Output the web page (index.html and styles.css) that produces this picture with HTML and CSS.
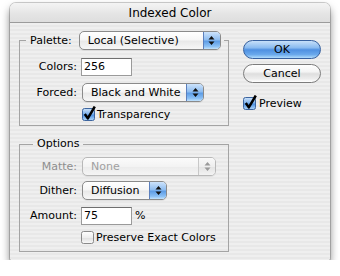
FILE: index.html
```html
<!DOCTYPE html>
<html>
<head>
<meta charset="utf-8">
<link rel="stylesheet" href="styles.css">
</head>
<body>
<div class="window">
  <div class="titlebar">Indexed Color</div>
  <div class="content">
    <div class="left">
      <fieldset class="group g1">
        <legend class="lg-popup">
          <span class="legend-row">
            <span class="lbl-legend">Palette:</span>
            <span class="popup w-palette">
              <span class="pv">Local (Selective)</span>
              <span class="arrows"><svg width="7" height="11" viewBox="0 0 7 11"><path d="M0.5 4.5 L3.5 1 L6.5 4.5 Z M0.5 6.5 L3.5 10 L6.5 6.5 Z" fill="#111"/></svg></span>
            </span>
          </span>
        </legend>
        <div class="row r-colors"><span class="lbl">Colors:</span><span class="field">256</span></div>
        <div class="row r-forced"><span class="lbl">Forced:</span>
          <span class="popup w-forced">
            <span class="pv">Black and White</span>
            <span class="arrows"><svg width="7" height="11" viewBox="0 0 7 11"><path d="M0.5 4.5 L3.5 1 L6.5 4.5 Z M0.5 6.5 L3.5 10 L6.5 6.5 Z" fill="#111"/></svg></span>
          </span>
        </div>
        <div class="row r-check r-transp">
          <svg class="cb" width="14" height="15" viewBox="0 0 14 15"><defs><linearGradient id="cbA" x1="0" y1="0" x2="0" y2="1"><stop offset="0" stop-color="#cfe4fa"/><stop offset=".45" stop-color="#7fb2ec"/><stop offset=".55" stop-color="#4f92e2"/><stop offset="1" stop-color="#b4dafc"/></linearGradient></defs><rect x="0.5" y="2.5" width="12" height="12" rx="2" fill="url(#cbA)" stroke="#3d659f"/><path d="M2.8 8 L5.8 12.4 L12.8 0.5" fill="none" stroke="#000" stroke-width="2.5" stroke-linejoin="round"/></svg>
          <span>Transparency</span>
        </div>
      </fieldset>
      <fieldset class="group g2">
        <legend class="lg-text">Options</legend>
        <div class="row r-matte disabled"><span class="lbl">Matte:</span>
          <span class="popup w-matte">
            <span class="pv">None</span>
            <span class="arrows"><svg width="7" height="11" viewBox="0 0 7 11"><path d="M0.5 4.5 L3.5 1 L6.5 4.5 Z M0.5 6.5 L3.5 10 L6.5 6.5 Z" fill="#9a9a9a"/></svg></span>
          </span>
        </div>
        <div class="row r-dither"><span class="lbl">Dither:</span>
          <span class="popup w-dither">
            <span class="pv">Diffusion</span>
            <span class="arrows"><svg width="7" height="11" viewBox="0 0 7 11"><path d="M0.5 4.5 L3.5 1 L6.5 4.5 Z M0.5 6.5 L3.5 10 L6.5 6.5 Z" fill="#111"/></svg></span>
          </span>
        </div>
        <div class="row r-amount"><span class="lbl">Amount:</span><span class="field">75</span><span class="pct">%</span></div>
        <div class="row r-check r-preserve">
          <svg class="cb" width="14" height="15" viewBox="0 0 14 15"><defs><linearGradient id="cbB" x1="0" y1="0" x2="0" y2="1"><stop offset="0" stop-color="#ffffff"/><stop offset=".5" stop-color="#eeeeee"/><stop offset=".55" stop-color="#e0e0e0"/><stop offset="1" stop-color="#fafafa"/></linearGradient></defs><rect x="0.5" y="2.5" width="12" height="12" rx="2" fill="url(#cbB)" stroke="#8a8a8a"/></svg>
          <span>Preserve Exact Colors</span>
        </div>
      </fieldset>
    </div>
    <div class="right">
      <div class="btn ok">OK</div>
      <div class="btn cancel">Cancel</div>
      <div class="row r-check r-preview">
        <svg class="cb" width="14" height="15" viewBox="0 0 14 15"><defs><linearGradient id="cbC" x1="0" y1="0" x2="0" y2="1"><stop offset="0" stop-color="#cfe4fa"/><stop offset=".45" stop-color="#7fb2ec"/><stop offset=".55" stop-color="#4f92e2"/><stop offset="1" stop-color="#b4dafc"/></linearGradient></defs><rect x="0.5" y="2.5" width="12" height="12" rx="2" fill="url(#cbC)" stroke="#3d659f"/><path d="M2.8 8 L5.8 12.4 L12.8 0.5" fill="none" stroke="#000" stroke-width="2.5" stroke-linejoin="round"/></svg>
        <span>Preview</span>
      </div>
    </div>
  </div>
</div>
</body>
</html>
```

FILE: styles.css
```css
html, body {
  margin: 0;
  padding: 0;
  background: #ffffff;
}
body {
  font-family: "DejaVu Sans", "Liberation Sans", sans-serif;
  font-size: 11px;
  color: #000;
}
.window {
  margin: 3px 0 0 10px;
  width: 320px;
  height: 257px;
  box-sizing: border-box;
  border-radius: 6px 6px 2px 2px;
  background: repeating-linear-gradient(to bottom, #efefef 0px, #efefef 2px, #e8e8e8 2px, #e8e8e8 4px);
  box-shadow: 0 0 0 1px rgba(0,0,0,0.18), 0 5px 9px rgba(0,0,0,0.5);
  display: flex;
  flex-direction: column;
  overflow: hidden;
}
.titlebar {
  height: 19px;
  line-height: 20px;
  border-bottom: 1px solid #9b9b9b;
  text-align: center;
  font-size: 12px;
  background: linear-gradient(#f4f4f4, #e4e4e4 60%, #dedede);
}
.content {
  display: flex;
  gap: 14px;
  padding: 8px 9px 8px 9px;
}
.left {
  width: 210px;
  display: flex;
  flex-direction: column;
}
.right {
  width: 78px;
  display: flex;
  flex-direction: column;
}
.group {
  margin: 0;
  padding: 0;
  min-width: 0;
  border: 1px solid #a4a4a4;
}
.g1 { padding-bottom: 4px; }
.g2 { margin-top: 11px; padding-bottom: 7px; }
.lg-popup {
  margin-left: 6px;
  padding: 0 3px 0 4px;
}
.legend-row {
  display: flex;
  align-items: center;
  gap: 7px;
  height: 19px;
}
.lg-text {
  margin-left: 13px;
  padding: 0 4px;
  line-height: 14px;
  height: 14px;
}
.row {
  display: flex;
  align-items: center;
}
.lbl {
  width: 57px;
  text-align: right;
  margin-right: 4px;
}
.r-colors { margin-top: 7px; height: 19px; }
.r-forced { margin-top: 7px; height: 19px; }
.r-matte { margin-top: 6px; height: 19px; }
.r-dither { margin-top: 5px; height: 19px; }
.r-amount { margin-top: 6px; height: 19px; }
.r-check {
  height: 15px;
  gap: 1px;
  align-items: flex-end;
}
.r-check span { line-height: 13px; }
.r-transp { margin-top: 4px; padding-left: 62px; }
.r-preserve { margin-top: 4px; padding-left: 61px; }
.r-preview { margin-top: 12px; gap: 2px; }
.cb { display: block; flex: none; }

.popup {
  display: flex;
  align-items: center;
  height: 19px;
  box-sizing: border-box;
  border: 1px solid #8a8a8a;
  border-radius: 5px;
  background: linear-gradient(#ffffff, #f6f6f6 45%, #e9e9e9 55%, #f7f7f7);
  overflow: hidden;
  box-shadow: 0 1px 0 rgba(0,0,0,0.06);
}
.row .popup { margin-left: 1px; }
.pv {
  flex: 1;
  padding-left: 8px;
  white-space: nowrap;
}
.arrows {
  width: 16px;
  height: 100%;
  flex: none;
  display: flex;
  align-items: center;
  justify-content: center;
  border-left: 1px solid #5b7fbd;
  background: linear-gradient(#cde3fb, #8fbdf0 45%, #5e9de6 55%, #8cc1f5 85%, #c3e3fd);
}
.w-palette { width: 142px; }
.w-forced { width: 122px; }
.w-matte { width: 134px; }
.w-dither { width: 85px; }

.disabled .lbl { color: #8e8e8e; }
.disabled .popup {
  border-color: #b8b8b8;
  background: linear-gradient(#fbfbfb, #f3f3f3 50%, #ececec 55%, #f5f5f5);
}
.disabled .pv { color: #a0a0a0; }
.disabled .arrows {
  border-left-color: #c8c8c8;
  background: linear-gradient(#f9f9f9, #eeeeee 50%, #e4e4e4 55%, #f3f3f3);
}

.field {
  width: 51px;
  height: 18px;
  box-sizing: border-box;
  border: 1px solid #9a9a9a;
  border-top-color: #6f6f6f;
  background: #ffffff;
  padding-left: 2px;
  line-height: 16px;
}
.pct { margin-left: 3px; }

.btn {
  height: 19px;
  box-sizing: border-box;
  border-radius: 10px;
  text-align: center;
  line-height: 17px;
  border: 1px solid #6e6e6e;
}
.ok {
  margin-top: 9px;
  border-color: #36609f;
  background: linear-gradient(#c7e0f9, #89baf0 40%, #4f90e1 52%, #6aa9ec 80%, #b1dcfc);
}
.cancel {
  margin-top: 5px;
  border-color: #7c7c7c;
  background: linear-gradient(#ffffff, #f4f4f4 40%, #dedede 52%, #ececec 80%, #ffffff);
}
```
